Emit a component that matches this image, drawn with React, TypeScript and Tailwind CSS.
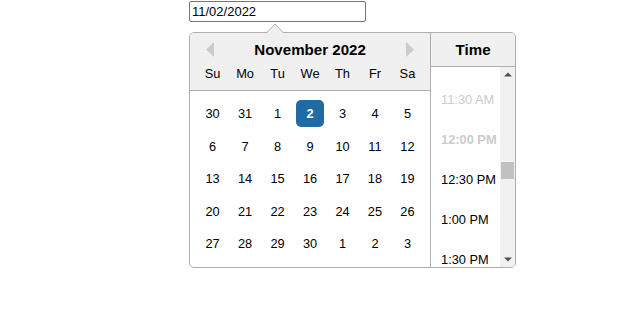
import React from "react";

const weeks = [
  ["30", "31", "1", "2", "3", "4", "5"],
  ["6", "7", "8", "9", "10", "11", "12"],
  ["13", "14", "15", "16", "17", "18", "19"],
  ["20", "21", "22", "23", "24", "25", "26"],
  ["27", "28", "29", "30", "1", "2", "3"],
];
const dayNames = ["Su", "Mo", "Tu", "We", "Th", "Fr", "Sa"];

const times: { t: string; disabled?: boolean; bold?: boolean }[] = [
  { t: "11:30 AM", disabled: true },
  { t: "12:00 PM", disabled: true, bold: true },
  { t: "12:30 PM" },
  { t: "1:00 PM" },
  { t: "1:30 PM" },
];

export default function App() {
  return (
    <div
      className="w-[631px] h-[322px] bg-white pl-[189px] pt-[1px]"
      style={{ fontFamily: '"Liberation Sans", Arial, sans-serif' }}
    >
      <div className="w-[177px] h-[21px] border border-[#767676] rounded-[2px] pl-[2px] text-[13px] leading-[19px] text-black">
        11/02/2022
      </div>
      <div className="relative mt-[10px] inline-flex items-start border border-[#aeaeae] rounded-[5px] bg-white text-black">
        {/* triangle */}
        <svg
          className="absolute left-[76px] top-[-10px]"
          width="18"
          height="11"
          viewBox="0 0 18 11"
        >
          <polygon points="0,10.5 9,1 18,10.5" fill="#f0f0f0" />
          <polyline points="0,10.5 9,1 18,10.5" fill="none" stroke="#aeaeae" strokeWidth="1" />
          <rect x="0.8" y="10" width="16.4" height="1" fill="#f0f0f0" />
        </svg>

        {/* month */}
        <div className="flex flex-col">
          <div className="relative bg-[#f0f0f0] border-b border-[#aeaeae] rounded-tl-[4px] pt-2">
            <div className="h-[17px] leading-[17px] text-center text-[15.1px] font-bold">
              November 2022
            </div>
            <svg className="absolute left-[16px] top-[9px]" width="8" height="15" viewBox="0 0 8 15">
              <polygon points="8,0 0,7.5 8,15" fill="#cccccc" />
            </svg>
            <svg className="absolute left-[216px] top-[9px]" width="8" height="15" viewBox="0 0 8 15">
              <polygon points="0,0 8,7.5 0,15" fill="#cccccc" />
            </svg>
            <div className="flex mx-[6.4px] mt-[2px] mb-[3px]">
              {dayNames.map((d) => (
                <div
                  key={d}
                  className="w-[27.2px] h-[27.2px] mx-[2.656px] leading-[27.2px] text-center text-[12.8px]"
                >
                  {d}
                </div>
              ))}
            </div>
          </div>
          <div className="m-[6.4px] flex flex-col">
            {weeks.map((w, i) => (
              <div key={i} className="flex">
                {w.map((d, j) => {
                  const sel = i === 0 && j === 3;
                  return (
                    <div
                      key={j}
                      className={
                        sel
                          ? "w-[27.2px] h-[27.2px] m-[2.656px] leading-[27.2px] text-center text-[12.8px] rounded-[5px] bg-[#216ba5] text-white font-bold"
                          : "w-[27.2px] h-[27.2px] m-[2.656px] leading-[27.2px] text-center text-[12.8px]"
                      }
                    >
                      {d}
                    </div>
                  );
                })}
              </div>
            ))}
          </div>
        </div>

        {/* time */}
        <div className="w-[85px] self-stretch border-l border-[#aeaeae] flex flex-col">
          <div className="bg-[#f0f0f0] border-b border-[#aeaeae] rounded-tr-[4px] pt-2 pb-2">
            <div className="h-[17px] leading-[17px] text-center text-[15.1px] font-bold">Time</div>
          </div>
          <div className="flex h-[200px] shrink-0 overflow-hidden">
            <div className="flex-1 overflow-hidden pt-[13px] pl-[10px]">
              {times.map((x) => (
                <div
                  key={x.t}
                  className={
                    "h-[40px] leading-[40px] text-[12.8px] whitespace-nowrap " +
                    (x.disabled ? "text-[#cccccc] " : "text-black ") +
                    (x.bold ? "font-bold" : "")
                  }
                >
                  {x.t}
                </div>
              ))}
            </div>
            <div className="w-[15px] h-[200px] bg-[#f1f1f1] flex flex-col items-center rounded-br-[4px]">
              <div className="h-[15px] flex items-center justify-center">
                <svg width="8" height="5" viewBox="0 0 8 5">
                  <polygon points="0,4.5 4,0.5 8,4.5" fill="#505050" />
                </svg>
              </div>
              <div className="h-[80px]" />
              <div className="w-[13px] h-[17px] bg-[#c1c1c1]" />
              <div className="flex-1" />
              <div className="h-[15px] flex items-center justify-center">
                <svg width="8" height="5" viewBox="0 0 8 5">
                  <polygon points="0,0.5 4,4.5 8,0.5" fill="#505050" />
                </svg>
              </div>
            </div>
          </div>
        </div>
      </div>
    </div>
  );
}
